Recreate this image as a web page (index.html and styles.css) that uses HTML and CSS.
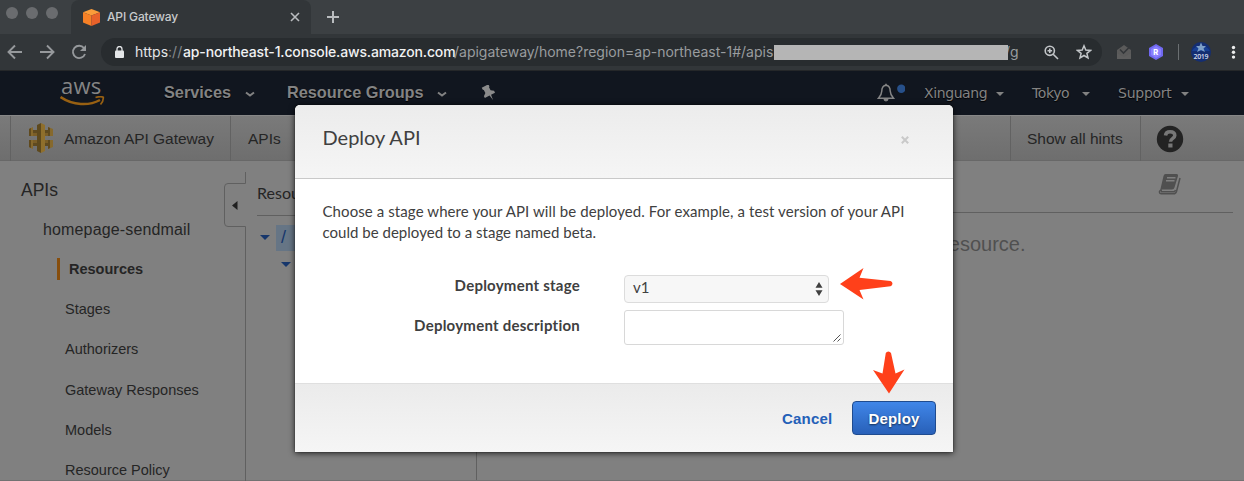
FILE: index.html
```html
<!DOCTYPE html>
<html lang="en">
<head>
<meta charset="utf-8">
<title>API Gateway</title>
<link rel="stylesheet" href="styles.css">
</head>
<body>
<div class="browser">
  <div class="tabstrip">
    <div class="lights"><i></i><i></i><i></i></div>
    <div class="tab">
      <svg class="favicon" width="17" height="17" viewBox="0 0 17 17"><path d="M8.5 0 17 3.2 8.5 6.6 0 3.2Z" fill="#fa9c3a"/><path d="M0 3.2 8.5 6.6V17L0 13.4Z" fill="#f68026"/><path d="M17 3.2 8.5 6.6V17L17 13.4Z" fill="#e8612a"/></svg>
      <span class="tab-title">API Gateway</span>
      <svg width="10" height="10" viewBox="0 0 10 10" stroke="#b9bcbf" stroke-width="1.6"><path d="M1 1 9 9M9 1 1 9"/></svg>
    </div>
    <svg class="plus" width="12" height="12" viewBox="0 0 12 12" stroke="#b9bcbf" stroke-width="2"><path d="M6 0V12M0 6H12"/></svg>
  </div>
  <div class="toolbar">
    <svg width="94" height="36" viewBox="0 0 94 36" fill="none" stroke="#96999c" stroke-width="1.9"><path d="M22 18H9M15 11.5 8.5 18 15 24.5"/><path d="M40 18H53M47 11.5 53.500 18 47 24.500"/><path d="M84 14A6.200 6.200 0 1 0 85 20"/><path d="M86 11V17H80Z" fill="#96999c" stroke="none"/></svg>
    <div class="omnibox">
      <svg class="lock" width="9" height="12" viewBox="0 0 9 12"><path d="M2 5V3a2.500 2.500 0 0 1 5 0v2" fill="none" stroke="#e4e6e8" stroke-width="1.300"/><rect y="4.500" width="9" height="7.500" rx="1" fill="#e4e6e8"/></svg>
      <div class="url"><span class="scheme">https<em>://</em></span><span class="host">ap-northeast-1.console.aws.amazon.com</span><span class="path">/apigateway/home?region=ap-northeast-1#/apis</span></div>
      <div class="redacted"></div>
      <span class="url-tail">/g</span>
      <svg class="zoomicon" width="15" height="15" viewBox="0 0 15 15" fill="none" stroke="#c2c5c8" stroke-width="1.600"><circle cx="5.800" cy="5.800" r="4.600"/><path d="M9.200 9.200 14 14M3.500 5.800H8.100M5.800 3.500V8.100"/></svg>
      <svg class="star" width="16" height="16" viewBox="0 0 16 16" fill="none" stroke="#c2c5c8" stroke-width="1.500"><path d="M8 1.800 9.800 6 14.500 6.400 10.900 9.400 12 14 8 11.500 4 14 5.100 9.400 1.500 6.400 6.200 6Z"/></svg>
    </div>
    <svg class="extensions" width="140" height="36" viewBox="1102 34 140 36">
      <path d="M1117 50 1124 45 1131 50V59H1117Z" fill="#5a5a5a"/><path d="M1120 49.500 1123.500 53 1130 46.500" fill="none" stroke="#34373a" stroke-width="1.600"/><path d="M1117 53 1124 57 1131 53V59H1117Z" fill="#5d5d5d"/>
      <path d="M1156 44 1163 48V56L1156 60 1149 56V48Z" fill="#7068f0"/><path d="M1156 46 1161 49V55L1156 58 1151 55V49Z" fill="#8a80ff"/>
      <text x="1153.200" y="55" font-family="Inter" font-size="7.500" font-weight="800" fill="#fff">R</text>
      <path d="M1178.500 44V60" stroke="#6b6f72"/>
      <circle cx="1201" cy="52" r="10" fill="#142e72"/><path d="M1192 51A10 9 0 0 1 1210 51Z" fill="#173f93"/>
      <path d="M1201 42.500 1202.500 46 1206 46 1203.500 48.500 1205 52 1201 50 1197 52 1198.500 48.500 1196 46 1199.500 46Z" fill="#7d9fc8"/>
      <text x="1193.500" y="58.500" font-family="Open Sans" font-size="7" font-weight="600" fill="#d4dcea" textLength="15">2019</text>
      <g fill="#eceded"><circle cx="1233.500" cy="47.500" r="1.700"/><circle cx="1233.500" cy="52.300" r="1.700"/><circle cx="1233.500" cy="57.100" r="1.700"/></g>
    </svg>
  </div>
</div>
<div class="console-nav">
  <div class="aws"><span>aws</span><svg width="45" height="14" viewBox="0 0 45 14"><path d="M.5 1C13 9.500 29 10 40 4" fill="none" stroke="#986012" stroke-width="2.500"/><path d="M35.500 1.500C39 .5 42 .5 43.300 1.300 43.500 4 42.300 6.500 40.500 8.500" fill="none" stroke="#986012" stroke-width="1.700"/></svg></div>
  <div class="item services">Services</div>
  <svg class="chev c1" width="10" height="7" viewBox="0 0 10 7"><path d="M1 1.500 5 4.500 9 1.500" fill="none" stroke="#828282" stroke-width="2"/></svg>
  <div class="item groups">Resource Groups</div>
  <svg class="chev c2" width="10" height="7" viewBox="0 0 10 7"><path d="M1 1.500 5 4.500 9 1.500" fill="none" stroke="#828282" stroke-width="2"/></svg>
  <svg class="pin" width="16" height="16" viewBox="0 0 16 16"><path transform="rotate(-28 8 8)" d="M4 0H11.500V2.300L10.700 3V6.300L13.500 8.400V10.500H9L8.300 16 7.300 10.500H2V8.400L4.800 6.300V3L4 2.300Z" fill="#8b8b8b"/></svg>
  <svg class="bell" width="28" height="20" viewBox="0 0 28 20"><path d="M9 2.200C5.500 2.600 4.800 5 4.800 8S3.800 12.500 1.500 15.200H16.500C14.200 12.500 13.200 11 13.200 8S12.500 2.600 9 2.200Z" fill="none" stroke="#858585" stroke-width="1.500"/><path d="M6.500 16H11.500A2.500 2.500 0 0 1 6.500 16ZM8.200.8H9.800V2.500H8.200Z" fill="#858585"/><circle cx="24.300" cy="5.700" r="4.200" fill="#27508a"/></svg>
  <div class="item small user">Xinguang</div><i class="tri"></i>
  <div class="item small region">Tokyo</div><i class="tri"></i>
  <div class="item small support">Support</div><i class="tri"></i>
</div>
<div class="servicebar">
  <div class="edge"></div>
  <div class="service">
    <svg width="26" height="30" viewBox="0 0 26 30"><path d="M4 7H22V13H4ZM4 17H22V23H4Z" fill="#7b5e27"/><path d="M1 6 5 4V13H1ZM1 17H5V26L1 24ZM20 4 25 6V13H20ZM20 17H25V24L20 26Z" fill="#86692d"/><path d="M1 6 3 5V13H1ZM1 17H3V25L1 24ZM20 4 22 5V13H20ZM20 17H22V25L20 26Z" fill="#604a1e"/><path d="M5 7H9V10H5ZM17 7H20V10H17ZM5 20H9V23H5ZM17 20H20V23H17Z" fill="#5f4a20"/><path d="M9 2 13 0V30L9 28Z" fill="#5e491d"/><path d="M13 0 17 2V28L13 30Z" fill="#8f6f2c"/></svg>
    <span>Amazon API Gateway</span>
  </div>
  <div class="crumb">APIs</div>
  <div class="hints">Show all hints</div>
  <div class="help"><svg width="28" height="28" viewBox="0 0 28 28"><circle cx="14" cy="14" r="13.200" fill="#232323"/><path d="M9.500 10.500C9.800 7.700 11.500 6.700 14 6.700 17 6.700 18.800 8.200 18.800 10.500 18.800 13.400 14.500 13.300 14.500 16.700" fill="none" stroke="#777" stroke-width="3.500"/><rect x="12.300" y="18.500" width="4.200" height="4" fill="#777"/></svg></div>
</div>
<div class="workspace">
  <div class="sidebar">
    <div class="side-title">APIs</div>
    <div class="api-name">homepage-sendmail</div>
    <div class="side-link active"><span>Resources</span></div>
    <div class="side-link">Stages</div>
    <div class="side-link">Authorizers</div>
    <div class="side-link">Gateway Responses</div>
    <div class="side-link">Models</div>
    <div class="side-link">Resource Policy</div>
  </div>
  <svg class="collapse" width="23" height="320" viewBox="0 0 23 320"><path d="M22.500 11V22.500H5Q1.500 22.500 1.500 26V62Q1.500 65.500 5 65.500H22.500V320" fill="none" stroke="#606060"/><path d="M9 44.500 14.500 40V49Z" fill="#202020"/></svg>
  <div class="resources">
    <div class="res-head">Resources</div>
    <div class="tree"><i class="tree-arrow"></i><span class="root">/</span></div>
    <i class="tree-arrow child"></i>
  </div>
  <div class="detail">
    <div class="detail-head"><svg width="24" height="23" viewBox="0 0 24 23"><path d="M7.500 1H18.500Q20.500 1 20 3L16.500 14.500Q16 16.500 14 16.500H4Q3 16.500 2 18L5.500 3Q6 1 7.500 1Z" fill="#505050"/><path d="M22 5 18.500 18.500Q17.800 20.800 15.500 20.800H3.500Q1.300 20.800 1.500 18.500 2 17 4 17.300" fill="none" stroke="#505050" stroke-width="1.500"/><path d="M3 18.800H15.500Q17 18.800 17.500 17" fill="none" stroke="#505050" stroke-width="1.400"/><path d="M9 4.700H17.500M8 7.700H16.500" stroke="#808080" stroke-width="1.400"/></svg></div>
    <div class="hint-text">Choose a resource.</div>
  </div>
</div>
<div class="dialog">
  <div class="dialog-head"><span>Deploy API</span><svg width="8" height="8" viewBox="0 0 8 8" stroke="#c9c9c9" stroke-width="2"><path d="M.8.8 7.200 7.200M7.200.8.8 7.200"/></svg></div>
  <div class="dialog-body">
    <p>Choose a stage where your API will be deployed. For example, a test version of your API<br><span class="line-end">could be deployed to a stage named beta.</span></p>
    <div class="field stage"><label>Deployment stage</label><div class="select"><span>v1</span><svg width="8" height="14" viewBox="0 0 8 14" fill="#404040"><path d="M4 0 7.500 5.700H.5ZM4 14 7.500 8.300H.5Z"/></svg></div>
      <svg class="arrow-left" width="54" height="32" viewBox="0 0 54 32"><path d="M0 16 23.500 0 19.500 9.800 50.500 13A2.700 2.700 0 0 1 50.500 18.200L19.500 22 23.500 31.500Z" fill="#ff401a"/></svg></div>
    <div class="field desc"><label>Deployment description</label><div class="textarea"><svg width="8" height="8" viewBox="0 0 8 8"><path d="M.5 7.500 7.500.5M4.500 7.500 7.500 4.500" stroke="#555"/></svg></div></div>
  </div>
  <div class="dialog-foot"><span class="cancel">Cancel</span><button class="deploy">Deploy</button></div>
  <svg class="arrow-down" width="32" height="44" viewBox="0 0 32 44"><path d="M16 43.500 0 20 9.500 23.500 12.800 3A3 3 0 0 1 18 3L22.500 23.500 31.500 19.500Z" fill="#ff401a"/></svg>
</div>
</body>
</html>
```
FILE: styles.css
```css
* { box-sizing: border-box; }
body { margin: 0; width: 1244px; height: 481px; overflow: hidden; background: #808080; color: #252525; font-family: "Liberation Sans", Arial, sans-serif; white-space: nowrap; position: relative; }
svg { display: block; flex: none; }
i { display: block; flex: none; }

.tabstrip { height: 34px; background: #3c4043; display: flex; }
.lights { width: 71px; display: flex; gap: 8px; padding: 7px 0 0 6px; }
.lights i { width: 12px; height: 12px; border-radius: 50%; background: #6a6c6f; }
.tab { width: 240px; background: #323639; border-radius: 8px 8px 0 0; display: flex; align-items: center; padding: 0 11px 0 12px; }
.tab-title { flex: 1; margin: -2px 0 0 7px; font: 500 12px Inter, sans-serif; letter-spacing: -.15px; color: #c8cacc; }
.plus { margin: 11px 0 0 16px; }
.toolbar { height: 37px; background: #323639; border-bottom: 1px solid #252729; display: flex; }
.toolbar > svg { margin-right: 7px; }
.omnibox { width: 1001px; height: 28px; margin-top: 4px; border-radius: 14px; background: #282c2f; display: flex; align-items: center; flex: none; overflow: hidden; }
.toolbar > .extensions { margin: 0; }
.lock { margin-left: 14px; }
.url { width: 639px; margin-left: 11px; padding-bottom: 2px; font: 14px Inter, sans-serif; display: flex; flex: none; }
.scheme { width: 48px; flex: none; color: #e4e6e8; }
.scheme em { font-style: normal; color: #86898c; }
.host { width: 271px; flex: none; color: #f1f2f3; font-weight: 500; letter-spacing: -.15px; }
.path { color: #999c9f; }
.redacted { width: 234px; height: 15px; background: #b5b5b5; flex: none; position: relative; z-index: 1; }
.url-tail { color: #999c9f; font: 14px Inter, sans-serif; width: 37px; margin-left: -3px; padding-bottom: 2px; flex: none; }
.zoomicon { margin-left: 2px; }
.star { margin-left: 17px; }

.console-nav { height: 44px; background: #11161f; display: flex; align-items: center; }
.aws { width: 164px; padding-left: 60px; flex: none; height: 44px; }
.aws span { display: block; font: 500 22px/20px "Open Sans", sans-serif; color: #858585; margin: 4px 0 1px 1px; height: 20px; letter-spacing: .2px; }
.item { flex: none; font-weight: 700; font-size: 16.300px; color: #838383; text-shadow: 0 1px 1px #000; margin-top: -2px; }
.services { width: 81px; }
.groups { width: 150px; }
.chev { margin-top: 2px; }
.c1 { margin-right: 32px; }
.c2 { margin-right: 35px; }
.pin { margin-right: 380px; margin-left: -1px; }
.bell { margin-right: 19px; }
.small { font: 14px "DejaVu Sans", sans-serif; letter-spacing: -.4px; margin-top: 0; }
.tri { border: 4px solid transparent; border-top-color: #828282; border-bottom: 0; margin-top: 2px; }
.user { width: 72px; }
.region { width: 50px; margin-left: 28px; }
.support { width: 63px; margin-left: 28px; letter-spacing: -.25px; }

.servicebar { height: 46px; border-top: 1px solid #878787; border-bottom: 1px solid #686868; background: linear-gradient(#7a7a7a, #6e6e6e); display: flex; align-items: center; font-size: 15.500px; }
.servicebar > div { height: 45px; display: flex; align-items: center; flex: none; }
.edge { width: 11px; border-right: 1px solid #626262; }
.service { width: 220px; padding-left: 17px; border-right: 1px solid #626262; }
.service span { margin-left: 10px; padding-top: 2px; letter-spacing: -.05px; }
.servicebar > .crumb { padding: 2px 0 0 17px; width: 779px; }
.servicebar > .hints { width: 131px; border: solid #626262; border-width: 0 1px; padding: 2px 0 0 16px; }
.help { padding-left: 15px; }
.help svg { margin-top: 2px; }

.workspace { height: 320px; display: flex; border-bottom: 1px solid #727272; }
.sidebar { width: 223px; flex: none; }
.side-title { font-size: 17.500px; line-height: 20px; padding: 19px 0 0 21px; }
.api-name { font-size: 16px; line-height: 20px; padding: 20px 0 0 43px; letter-spacing: .15px; }
.side-link { height: 40.200px; line-height: 22px; font-size: 14.500px; padding-left: 65px; }
.side-link.active { padding-left: 57px; margin-top: 18px; height: 40.300px; font-weight: 700; }
.active span { display: block; border-left: 3px solid #874e0d; padding-left: 9px; }
.resources { width: 231px; padding: 21px 0 0 11px; border-right: 1px solid #606060; flex: none; }
.res-head { height: 34px; font: 16px/22px Lato, sans-serif; border-bottom: 1px solid #606060; }
.tree { display: flex; align-items: center; margin: 9px 0 0 3px; }
.tree-arrow { border: 5px solid transparent; border-top-color: #17376c; border-bottom: 0; }
.tree .tree-arrow { margin-top: -2px; }
.root { background: #667585; width: 100px; height: 26px; margin-left: 6px; padding-left: 5px; line-height: 24px; font-size: 18px; color: #17376c; }
.child { width: 0; margin: 11px 0 0 24px; }
.detail { flex: 1; padding: 0 11px 0 20px; }
.detail-head { height: 52px; border-bottom: 1px solid #606060; padding: 12px 0 0 661px; }
.hint-text { width: 528.500px; text-align: right; font-size: 20px; margin-top: 20px; color: #505050; }

.dialog { position: absolute; left: 295px; top: 105px; width: 658px; height: 347px; background: #fff; border-radius: 5px 5px 0 0; box-shadow: 0 1px 6px #000c, 0 0 1px #000; color: #404040; font-family: Lato, sans-serif; display: flex; flex-direction: column; }
.dialog-head { height: 74px; background: linear-gradient(#ececec, #f5f5f5); border-bottom: 1px solid #c9c9c9; border-radius: 5px 5px 0 0; padding: 19px 44px 0 27.500px; display: flex; justify-content: space-between; font-size: 20px; line-height: 26px; }
.dialog-head svg { margin-top: 12px; }
.dialog-body { height: 204px; padding: 22px 0 0 27.500px; }
p { margin: 0; font-size: 15px; line-height: 21px; height: 74px; letter-spacing: .09px; }
.line-end { letter-spacing: .02px; }
.field { display: flex; }
.field label { width: 257.500px; margin-right: 44px; text-align: right; font-weight: 700; font-size: 15px; line-height: 21px; letter-spacing: .24px; flex: none; }
.stage { height: 35px; }
.select { width: 205px; height: 28px; border: 1px solid #dcdcdc; border-radius: 4px; background: #f7f7f7; display: flex; justify-content: space-between; padding: 0 5px 0 8px; align-items: center; }
.select span { font: 15px/22px Lato, sans-serif; height: 26px; }
.arrow-left { margin: -7px 0 0 11px; }
.desc label { margin-top: 5px; }
.textarea { width: 220px; height: 35px; border: 1px solid #d8d8d8; border-radius: 3px; display: flex; justify-content: flex-end; align-items: flex-end; padding: 2px; }
.dialog-foot { height: 69px; border-top: 1px solid #dfdfdf; background: linear-gradient(#ebebeb, #f5f5f5); display: flex; align-items: flex-start; justify-content: flex-end; padding: 17px 17px 0; font: 700 15px "Liberation Sans", Arial, sans-serif; letter-spacing: .2px; }
.cancel { color: #2460b8; line-height: 36px; width: 70px; }
.deploy { width: 84px; height: 34px; padding: 0; border: 1px solid #1f4b8f; border-radius: 4px; background: linear-gradient(#4086e8, #2860b8); color: #fff; font: inherit; letter-spacing: .2px; text-shadow: 0 1px 2px #0009; }
.arrow-down { position: absolute; left: 577.500px; top: 245px; }
```
